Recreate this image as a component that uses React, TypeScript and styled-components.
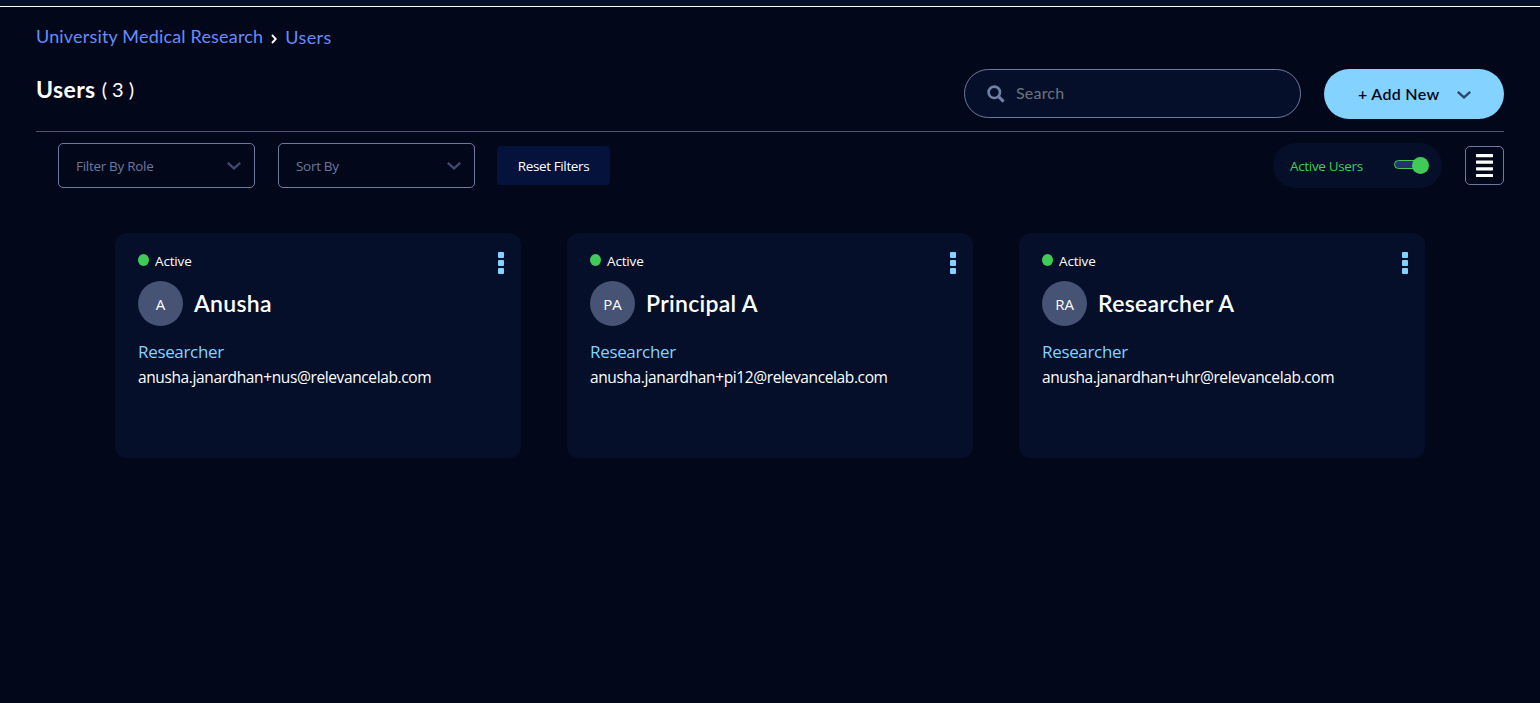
import React from "react";
import styled, { createGlobalStyle } from "styled-components";

const body = `"Open Sans", "Noto Sans", sans-serif`;
const display = `Lato, "Open Sans", sans-serif`;

const GlobalStyle = createGlobalStyle`
  * { box-sizing: border-box; }
  body { margin: 0; background: #02081a; color: #fff; font-family: ${body}; }
  button, input { font: inherit; color: inherit; margin: 0; }
`;

const Page = styled.div`
  min-height: 703px;
  background: #02081a;
`;

const TopBar = styled.div`
  height: 7px;
  background: #050f29;
  border-bottom: 1px solid #fff;
`;

const Main = styled.main`
  padding: 0 36px;
`;

const Breadcrumb = styled.nav`
  display: flex;
  height: 62px;
  padding-top: 17px;
  font: 400 18px/24px ${display};
  white-space: nowrap;
`;

const Crumb = styled.a<{ $space: number; $drop?: number }>`
  color: #668cff;
  letter-spacing: ${(p) => p.$space}px;
  padding-top: ${(p) => p.$drop ?? 0}px;
`;

const CrumbArrow = styled.svg`
  margin: 10px 8px 0 8px;
  width: 6px;
  height: 10px;
`;

const Header = styled.header`
  display: flex;
  align-items: flex-start;
  height: 63px;
  border-bottom: 1px solid #495477;
`;

const Title = styled.h1`
  flex: 1;
  display: flex;
  gap: 6px;
  margin: 6px 0 0;
  font: 700 23px/28px ${display};
  letter-spacing: 0.4px;
`;

const Count = styled.span`
  font-size: 20px;
  font-weight: 400;
  line-height: 28px;
  letter-spacing: 0;
`;

const SearchBox = styled.label`
  display: flex;
  align-items: center;
  width: 337px;
  height: 49px;
  padding-left: 22px;
  gap: 11px;
  border: 1px solid #6d7a9f;
  border-radius: 25px;
  background: #050f29;
  color: #727fa6;
`;

const SearchInput = styled.input`
  width: 220px;
  padding: 0 0 2px;
  border: 0;
  outline: 0;
  background: transparent;
  font: 400 16px/24px ${display};
  letter-spacing: 0.2px;
  &::placeholder { color: #6c757d; opacity: 1; }
`;

const AddButton = styled.button`
  display: flex;
  align-items: center;
  width: 180px;
  height: 50px;
  margin-left: 23px;
  padding: 0 0 0 34px;
  gap: 18px;
  border: 0;
  border-radius: 25px;
  background: #84d2ff;
  color: #02081a;
  font: 600 16px/24px ${display};
  letter-spacing: 0.3px;
  white-space: nowrap;
`;

const AddChevron = styled.span`
  display: flex;
  padding-top: 1px;
  color: #2b466c;
`;

const Toolbar = styled.div`
  display: flex;
  align-items: center;
  height: 45px;
  margin-top: 11px;
  padding-left: 22px;
`;

const Select = styled.div`
  display: flex;
  align-items: center;
  justify-content: space-between;
  width: 197px;
  height: 45px;
  margin-right: 23px;
  padding: 0 13px 0 17px;
  border: 1px solid #6d7a9f;
  border-radius: 5px;
  color: #6b789e;
  font-size: 13.5px;
  letter-spacing: -0.3px;
  svg { color: #3d4a70; }
`;

const ResetButton = styled.button`
  width: 113px;
  height: 39px;
  margin-left: -1px;
  padding: 0;
  border: 0;
  border-radius: 4px;
  background: #04123c;
  font-size: 13.5px;
  letter-spacing: -0.38px;
`;

const ActiveFilter = styled.div`
  display: flex;
  align-items: center;
  justify-content: space-between;
  width: 169px;
  height: 45px;
  margin-left: auto;
  padding: 0 13px 0 17px;
  border-radius: 23px;
  background: #050f29;
  color: #40cb59;
  font-size: 13.5px;
  letter-spacing: -0.33px;
`;

const Switch = styled.svg`
  width: 35px;
  height: 17px;
`;

const ViewButton = styled.button`
  display: grid;
  place-items: center;
  width: 39px;
  height: 39px;
  margin-left: 23px;
  padding: 0;
  border: 1px solid #6d7a9f;
  border-radius: 5px;
  background: transparent;
`;

const Cards = styled.section`
  display: grid;
  grid-template-columns: repeat(3, 406px);
  gap: 46px;
  padding: 45px 0 0 79px;
`;

const Card = styled.article`
  height: 225px;
  padding: 19px 17px 0 23px;
  border-radius: 12px;
  background: #050f29;
`;

const CardTop = styled.div`
  display: flex;
  justify-content: space-between;
  height: 29px;
`;

const Status = styled.div`
  display: flex;
  gap: 6px;
  height: 18px;
  font-size: 13.5px;
  line-height: 18px;
  letter-spacing: -0.15px;
  &::before {
    content: "";
    width: 11px;
    height: 12px;
    margin-top: 2px;
    border-radius: 50%;
    background: #40cb59;
  }
`;

const Menu = styled.span`
  display: grid;
  gap: 2px;
  align-content: start;
  width: 6px;
`;

const MenuDot = styled.i`
  height: 6px;
  border-radius: 1px;
  background: #84d2ff;
`;

const Person = styled.div`
  display: flex;
  align-items: center;
  gap: 11px;
`;

const Avatar = styled.span`
  width: 45px;
  height: 45px;
  border-radius: 50%;
  background: #475374;
  font-size: 15px;
  line-height: 46px;
  text-align: center;
`;

const Name = styled.h2`
  margin: 0;
  padding-bottom: 2px;
  font: 600 23px/30px ${display};
  letter-spacing: 0.3px;
`;

const Role = styled.div`
  margin-top: 14px;
  color: #84d2ff;
  font-size: 17px;
  line-height: 24px;
  letter-spacing: -0.33px;
`;

const Email = styled.div`
  margin-top: 1px;
  font-size: 15.5px;
  line-height: 25px;
  letter-spacing: -0.38px;
`;

const Chevron = () => (
  <svg width="14" height="8" viewBox="0 0 14 8" fill="none" stroke="currentColor" strokeWidth="2.3">
    <path d="M.8 .8 7 6.4 13.2 .8" />
  </svg>
);

const users = [
  { initials: "A", name: "Anusha", email: "anusha.janardhan+nus@relevancelab.com" },
  { initials: "PA", name: "Principal A", email: "anusha.janardhan+pi12@relevancelab.com" },
  { initials: "RA", name: "Researcher A", email: "anusha.janardhan+uhr@relevancelab.com" },
];

export default function App() {
  return (
    <Page>
      <GlobalStyle />
      <TopBar />
      <Main>
        <Breadcrumb>
          <Crumb $space={0.18}>University Medical Research</Crumb>
          <CrumbArrow viewBox="0 0 6 10" fill="none" stroke="#fff" strokeWidth="1.9">
            <path d="M1 1 4.8 5 1 9" />
          </CrumbArrow>
          <Crumb $space={0.4} $drop={1}>Users</Crumb>
        </Breadcrumb>
        <Header>
          <Title>Users <Count>( 3 )</Count></Title>
          <SearchBox>
            <svg width="18" height="18" viewBox="0 0 18 18" fill="none" stroke="currentColor">
              <circle cx="7.3" cy="7.3" r="5.7" strokeWidth="2.6" />
              <path d="m11.6 11.6 5 5" strokeWidth="3" />
            </svg>
            <SearchInput placeholder="Search" />
          </SearchBox>
          <AddButton>
            + Add New
            <AddChevron><Chevron /></AddChevron>
          </AddButton>
        </Header>
        <Toolbar>
          <Select>Filter By Role<Chevron /></Select>
          <Select>Sort By<Chevron /></Select>
          <ResetButton>Reset Filters</ResetButton>
          <ActiveFilter>
            Active Users
            <Switch viewBox="0 0 35 17">
              <rect x=".5" y="3.5" width="30" height="8" rx="4" fill="#273270" stroke="#40cb59" />
              <circle cx="26.5" cy="8.5" r="8.5" fill="#40cb59" />
            </Switch>
          </ActiveFilter>
          <ViewButton>
            <svg width="17" height="23" viewBox="0 0 17 23" fill="#fff">
              {[0, 6.5, 13.2, 20].map((y) => (
                <rect key={y} y={y} width="17" height="3.2" rx=".6" />
              ))}
            </svg>
          </ViewButton>
        </Toolbar>
        <Cards>
          {users.map((u) => (
            <Card key={u.name}>
              <CardTop>
                <Status>Active</Status>
                <Menu><MenuDot /><MenuDot /><MenuDot /></Menu>
              </CardTop>
              <Person>
                <Avatar>{u.initials}</Avatar>
                <Name>{u.name}</Name>
              </Person>
              <Role>Researcher</Role>
              <Email>{u.email}</Email>
            </Card>
          ))}
        </Cards>
      </Main>
    </Page>
  );
}
